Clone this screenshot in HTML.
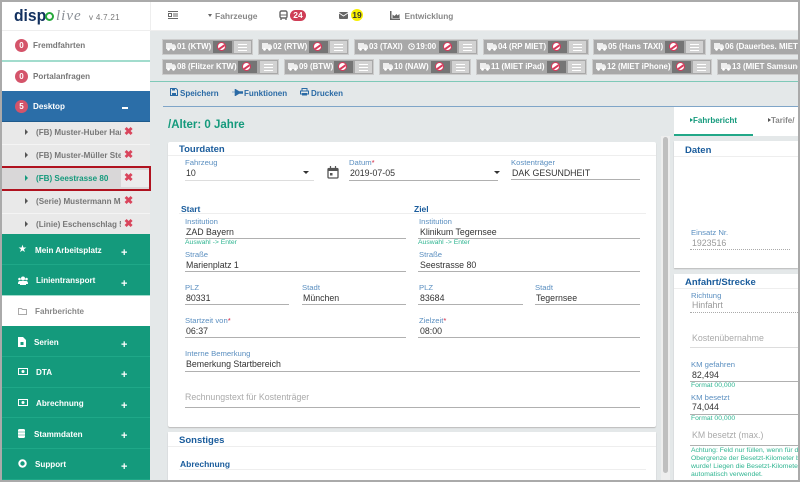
<!DOCTYPE html>
<html><head><meta charset="utf-8"><style>
html,body{margin:0;padding:0}
body{width:800px;height:482px;overflow:hidden;position:relative;background:#e4e8e9;font-family:"Liberation Sans",sans-serif}
div,span.a,svg.a{position:absolute}
.t{white-space:nowrap;line-height:12px}
.s{font-size:8.1px;font-weight:bold;color:#777}
.m{font-size:8.1px;font-weight:bold;color:#fff}
.g{background:#149a7c;left:2px;width:148px;border-bottom:1px solid #1fa888}
.b{width:13px;height:13px;border-radius:7px;background:#d4546a;color:#fff;font-size:8px;font-weight:bold;text-align:center;line-height:13px;left:15px}
.x{left:124px;font-size:11px;font-weight:bold;color:#d9455c;line-height:12px}
.p{left:121px;font-size:11px;font-weight:bold;color:#fff;line-height:12px}
.n{left:2px;width:148px;background:#e9e9e9;border-bottom:1px solid #f4f4f4}
.ar{width:0;height:0;border-left:3px solid #555;border-top:3px solid transparent;border-bottom:3px solid transparent;left:25px}
.tag{background:#a8a8a8;border:1px solid #ccc;height:14px;box-sizing:content-box;color:#fff;font-size:7.9px;font-weight:bold;line-height:14px;white-space:nowrap;overflow:hidden}
.tag:before{content:"";position:absolute;left:3px;top:3px;width:10px;height:6px;background:#eee;clip-path:polygon(0 0,60% 0,60% 20%,85% 20%,100% 55%,100% 100%,0 100%)}
.tag:after{content:"";position:absolute;left:4px;top:8px;width:8px;height:3px;background:radial-gradient(circle at 1.5px 1.4px,#fff 1.2px,transparent 1.5px),radial-gradient(circle at 6.5px 1.4px,#fff 1.2px,transparent 1.5px)}
.tag span.l{position:absolute;left:14px;top:0}
.tag i{position:absolute;top:1px;height:12px;background:#757575;display:block}
.tag u{position:absolute;top:1px;height:12px;width:17px;background:#d2d2d2;display:block;text-decoration:none}
.tag u:before{content:"";position:absolute;left:4px;right:4px;top:3px;height:5px;border-top:1px solid #fff;border-bottom:1px solid #fff}
.tag u:after{content:"";position:absolute;left:4px;right:4px;top:6px;height:1px;background:#fff}
.tag b{position:absolute;top:2px;width:7px;height:7px;border:1.5px solid #d9385a;border-radius:6px;background:#fff;display:block;overflow:hidden}
.tag b:after{content:"";position:absolute;left:-2px;top:2.500px;width:12px;height:2px;background:#d9385a;transform:rotate(-35deg)}
.lb{font-size:7.7px;color:#5b8fc0;white-space:nowrap;line-height:9px}
.v{font-size:8.8px;color:#333;white-space:nowrap;line-height:12px}
.ln{height:1px;background:#b0b0b0}
.hd{font-weight:bold;color:#1a5c9c;white-space:nowrap;font-size:9.5px;line-height:12px}
.hi{font-size:6.8px;color:#2fb591;white-space:nowrap;line-height:8px}
.st{color:#d21f3c}
.card{background:#fff;box-shadow:0 1px 1px #bbb}
.tb{font-size:8px;font-weight:bold;color:#2a6aa5;white-space:nowrap;line-height:12px}
</style></head><body>

<!-- header -->
<div style="left:2px;top:2px;width:796px;height:28px;background:#fff;border-bottom:1px solid #eee"></div>
<div style="left:150px;top:2px;width:1px;height:28px;background:#eee"></div>

<!-- logo -->
<div class="t" style="left:14px;top:6px;font-size:17px;font-weight:bold;color:#12305f;line-height:20px;transform:scaleX(.92);transform-origin:left top">disp</div>
<div style="left:45px;top:12px;width:5px;height:5px;border:2px solid #27a83c;border-radius:6px"></div>
<div class="t" style="left:56px;top:6px;font-family:'Liberation Serif',serif;font-style:italic;font-size:15px;color:#8a8f96;line-height:20px;letter-spacing:1px">live</div>
<div class="t" style="left:89px;top:12px;font-size:8px;color:#777;letter-spacing:.3px">v 4.7.21</div>

<!-- top nav -->
<svg class="a" style="left:168px;top:11px" width="11" height="8"><path d="M0 .5h10M0 7.500h10M5 3h5M5 5h5" stroke="#666" stroke-width="1"/><rect x=".5" y="2.500" width="3" height="3" fill="none" stroke="#666"/></svg>
<div style="left:208px;top:14px;width:0;height:0;border-left:2.500px solid transparent;border-right:2.500px solid transparent;border-top:3px solid #666"></div>
<div class="t" style="left:215px;top:10px;font-size:8.500px;font-weight:bold;color:#888">Fahrzeuge</div>
<svg class="a" style="left:279px;top:10px" width="9" height="11"><rect x="1" y="1" width="7" height="7" rx="1.500" fill="none" stroke="#666" stroke-width="1.400"/><path d="M1 5h7" stroke="#666"/><path d="M2 8v2M7 8v2" stroke="#666" stroke-width="1.400"/></svg>
<div style="left:290px;top:10px;width:16px;height:11px;border-radius:6px;background:#cf3e56;color:#fff;font-size:8.500px;font-weight:bold;text-align:center;line-height:11px">24</div>
<svg class="a" style="left:339px;top:12px" width="9" height="7"><rect width="9" height="7" rx="1" fill="#666"/><path d="M0 1l4.500 3L9 1" stroke="#fff" fill="none" stroke-width=".8"/></svg>
<div style="left:351px;top:9px;width:12px;height:12px;border-radius:6px;background:#f7f000;color:#333;font-size:8.500px;font-weight:bold;text-align:center;line-height:12px">19</div>
<svg class="a" style="left:390px;top:11px" width="10" height="9"><path d="M0 0h1.500v7.500H10V9H0zM2.500 7V3.500l2 1.500 2-2 1 1.500L9.500 3v4z" fill="#666"/></svg>
<div class="t" style="left:404.500px;top:10px;font-size:8.300px;font-weight:bold;color:#888">Entwicklung</div>

<!-- sidebar -->
<div style="left:2px;top:31px;width:148px;height:29px;background:#fff"></div>
<div style="left:2px;top:60px;width:148px;height:2px;background:#a2dccd"></div>
<div style="left:2px;top:62px;width:148px;height:29px;background:#fff"></div>
<div style="left:2px;top:91px;width:148px;height:31px;background:#2b6ea8;border-bottom:1px solid #1f5a8c;box-sizing:border-box"></div>
<div class="b" style="top:39px">0</div><div class="t s" style="left:33px;top:40px">Fremdfahrten</div>
<div class="b" style="top:70px">0</div><div class="t s" style="left:33px;top:71px">Portalanfragen</div>
<div class="b" style="top:100px">5</div><div class="t m" style="left:33px;top:101px">Desktop</div>
<div style="left:122px;top:107px;width:6px;height:1.500px;background:#fff"></div>

<div class="n" style="top:122px;height:22px"></div>
<div class="n" style="top:145px;height:22px"></div>
<div class="n" style="top:167px;height:24px;background:#d9d7d8;border:0"></div>
<div class="n" style="top:191px;height:22px"></div>
<div class="n" style="top:214px;height:20px"></div>
<div style="left:121px;top:170px;width:28px;height:17px;background:#ececec"></div>
<div class="ar" style="top:129px"></div><div class="t s" style="left:36px;top:127px;width:85px;overflow:hidden">(FB) Muster-Huber Hans</div><div class="t x" style="top:126px">✖</div>
<div class="ar" style="top:152px"></div><div class="t s" style="left:36px;top:150px;width:85px;overflow:hidden">(FB) Muster-Müller Stefan</div><div class="t x" style="top:149px">✖</div>
<div class="ar" style="top:175px;border-left-color:#149a7c"></div><div class="t s" style="left:36px;top:173px;color:#149a7c">(FB) Seestrasse 80</div><div class="t x" style="top:172px">✖</div>
<div class="ar" style="top:198px"></div><div class="t s" style="left:36px;top:196px;width:85px;overflow:hidden">(Serie) Mustermann Max</div><div class="t x" style="top:195px">✖</div>
<div class="ar" style="top:221px"></div><div class="t s" style="left:36px;top:219px;width:85px;overflow:hidden">(Linie) Eschenschlag 5 a</div><div class="t x" style="top:218px">✖</div>
<div style="left:0;top:166px;width:151px;height:25px;border:2px solid #b0121f;box-sizing:border-box"></div>

<div class="g" style="top:234px;height:30px"></div>
<div class="g" style="top:265px;height:30px;border-bottom:1px solid #a2dccd"></div>
<div style="left:2px;top:296px;width:148px;height:30px;background:#fff"></div>
<div class="g" style="top:326px;height:30px"></div>
<div class="g" style="top:357px;height:30px"></div>
<div class="g" style="top:388px;height:29px"></div>
<div class="g" style="top:418px;height:30px"></div>
<div class="g" style="top:449px;height:30px"></div>

<div class="t m" style="left:18px;top:244px;font-size:10px;font-weight:normal">★</div><div class="t m" style="left:35px;top:245px">Mein Arbeitsplatz</div><div class="p" style="top:247px">+</div>
<svg class="a" style="left:18px;top:276px" width="10" height="9"><circle cx="5" cy="2.500" r="2" fill="#fff"/><circle cx="1.500" cy="3" r="1.300" fill="#fff"/><circle cx="8.500" cy="3" r="1.300" fill="#fff"/><path d="M0 7.500Q0 5 2 5h6q2 0 2 2.500V8H0zM2 9V6h6v3z" fill="#fff"/></svg>
<div class="t m" style="left:36px;top:275px">Linientransport</div><div class="p" style="top:278px">+</div>
<svg class="a" style="left:18px;top:307px" width="9" height="8"><path d="M.5 1.500h3l1 1h4v5h-8z" fill="none" stroke="#aaa"/></svg>
<div class="t s" style="left:35px;top:306px;color:#888">Fahrberichte</div>
<svg class="a" style="left:18px;top:337px" width="8" height="10"><path d="M0 0h5l3 3v7H0z" fill="#fff"/><rect x="2.500" y="5" width="3" height="3" fill="#149a7c"/></svg>
<div class="t m" style="left:34px;top:337px">Serien</div><div class="p" style="top:339px">+</div>
<svg class="a" style="left:18px;top:368px" width="10" height="7"><rect x=".5" y=".5" width="9" height="6" fill="none" stroke="#fff"/><circle cx="5" cy="3.500" r="1.500" fill="#fff"/></svg>
<div class="t m" style="left:36px;top:367px">DTA</div><div class="p" style="top:369px">+</div>
<svg class="a" style="left:18px;top:399px" width="10" height="7"><rect x=".5" y=".5" width="9" height="6" fill="none" stroke="#fff"/><circle cx="5" cy="3.500" r="1.500" fill="#fff"/></svg>
<div class="t m" style="left:36px;top:398px">Abrechnung</div><div class="p" style="top:400px">+</div>
<svg class="a" style="left:18px;top:429px" width="7" height="9"><rect width="7" height="9" rx="1.500" fill="#fff"/><path d="M0 3h7M0 6h7" stroke="#149a7c" stroke-width=".5"/></svg>
<div class="t m" style="left:34px;top:429px">Stammdaten</div><div class="p" style="top:430px">+</div>
<svg class="a" style="left:18px;top:459px" width="9" height="9"><circle cx="4.500" cy="4.500" r="3.200" fill="none" stroke="#fff" stroke-width="2"/></svg>
<div class="t m" style="left:35px;top:459px">Support</div><div class="p" style="top:461px">+</div>

<!-- tag rows -->
<div class="tag" style="left:162px;top:39px;width:89px"><span class="l">01 (KTW)</span><i style="left:50px;width:19px"></i><b style="left:54px"></b><u style="left:71px"></u></div>
<div class="tag" style="left:258px;top:39px;width:89px"><span class="l">02 (RTW)</span><i style="left:50px;width:19px"></i><b style="left:54px"></b><u style="left:71px"></u></div>
<div class="tag" style="left:354px;top:39px;width:122px"><span class="l">03 (TAXI)</span><svg class="a" style="left:53px;top:3px" width="7" height="7"><circle cx="3.500" cy="3.500" r="2.800" fill="none" stroke="#fff"/><path d="M3.500 2v1.500H5" stroke="#fff" fill="none" stroke-width=".7"/></svg><span class="l" style="left:61px">19:00</span><i style="left:84px;width:18px"></i><b style="left:88px"></b><u style="left:104px"></u></div>
<div class="tag" style="left:483px;top:39px;width:104px"><span class="l">04 (RP MIET)</span><i style="left:64px;width:19px"></i><b style="left:68px"></b><u style="left:85px"></u></div>
<div class="tag" style="left:593px;top:39px;width:111px"><span class="l">05 (Hans TAXI)</span><i style="left:71px;width:19px"></i><b style="left:75px"></b><u style="left:92px"></u></div>
<div class="tag" style="left:710px;top:39px;width:90px"><span class="l">06 (Dauerbes. MIET)</span></div>

<div class="tag" style="left:162px;top:59px;width:115px"><span class="l">08 (Flitzer KTW)</span><i style="left:75px;width:19px"></i><b style="left:79px"></b><u style="left:97px"></u></div>
<div class="tag" style="left:284px;top:59px;width:88px"><span class="l">09 (BTW)</span><i style="left:49px;width:19px"></i><b style="left:53px"></b><u style="left:70px"></u></div>
<div class="tag" style="left:379px;top:59px;width:90px"><span class="l">10 (NAW)</span><i style="left:51px;width:19px"></i><b style="left:55px"></b><u style="left:72px"></u></div>
<div class="tag" style="left:476px;top:59px;width:109px"><span class="l">11 (MIET iPad)</span><i style="left:70px;width:19px"></i><b style="left:74px"></b><u style="left:91px"></u></div>
<div class="tag" style="left:592px;top:59px;width:118px"><span class="l">12 (MIET iPhone)</span><i style="left:79px;width:19px"></i><b style="left:83px"></b><u style="left:100px"></u></div>
<div class="tag" style="left:717px;top:59px;width:83px"><span class="l">13 (MIET Samsung)</span></div>

<div style="left:150px;top:81px;width:648px;height:1px;background:#7fc9b8"></div>

<!-- toolbar -->
<svg class="a" style="left:170px;top:88px" width="8" height="8"><path d="M.5.500h5.500l1.500 1.500v5.500h-7z" fill="none" stroke="#2a6aa5"/><path d="M2 .500h3v2H2zM2 5h4v2.500H2z" fill="#2a6aa5"/></svg>
<div class="tb" style="left:180px;top:88px">Speichern</div>
<svg class="a" style="left:232px;top:89px" width="11" height="7"><path d="M0 3h3M3 0v7l4-2.500h4v-2H7z" fill="#2a6aa5" stroke="#2a6aa5" stroke-width=".6"/></svg>
<div class="tb" style="left:244px;top:88px">Funktionen</div>
<svg class="a" style="left:300px;top:88px" width="9" height="8"><path d="M2 3V.500h5V3M2 6H.5V3h8v3H7" fill="none" stroke="#2a6aa5"/><path d="M2 5h5v2.500H2z" fill="#2a6aa5"/></svg>
<div class="tb" style="left:311px;top:88px">Drucken</div>
<div style="left:163px;top:106px;width:635px;height:1px;background:#7fa5c8"></div>

<div class="t" style="left:168px;top:118px;font-size:11.500px;font-weight:bold;color:#149a7c;line-height:14px">/Alter: 0 Jahre</div>

<!-- main card -->
<div class="card" style="left:168px;top:142px;width:488px;height:285px;border-radius:2px"></div>
<div style="left:168px;top:155px;width:488px;height:1px;background:#eee"></div>
<div class="hd" style="left:179px;top:144px">Tourdaten</div>

<div class="lb" style="left:185px;top:158px">Fahrzeug</div><div class="v" style="left:186px;top:167px">10</div>
<div style="left:303px;top:171px;width:0;height:0;border-left:3px solid transparent;border-right:3px solid transparent;border-top:3px solid #333"></div>
<div class="ln" style="left:185px;top:180px;width:129px;background:#ddd"></div>
<svg class="a" style="left:327px;top:166px" width="12" height="13"><rect x="1" y="2.500" width="10" height="9.500" rx="1" fill="none" stroke="#555" stroke-width="1.300"/><path d="M1 4h10" stroke="#555" stroke-width="2"/><path d="M3.500 0v2.500M8.500 0v2.500" stroke="#555" stroke-width="1.200"/><rect x="3" y="7" width="2.500" height="2.500" fill="#555"/></svg>
<div class="lb" style="left:349px;top:158px">Datum<span class="st">*</span></div><div class="v" style="left:350px;top:167px">2019-07-05</div>
<div style="left:494px;top:171px;width:0;height:0;border-left:3px solid transparent;border-right:3px solid transparent;border-top:3px solid #333"></div>
<div class="ln" style="left:349px;top:180px;width:149px"></div>
<div class="lb" style="left:511px;top:158px">Kostenträger</div><div class="v" style="left:512px;top:167px">DAK GESUNDHEIT</div>
<div class="ln" style="left:511px;top:179px;width:129px"></div>

<div class="t" style="left:181px;top:203px;font-size:8.500px;font-weight:bold;color:#1a5c9c">Start</div>
<div class="t" style="left:414px;top:203px;font-size:8.500px;font-weight:bold;color:#1a5c9c">Ziel</div>
<div style="left:179px;top:213px;width:467px;height:1px;background:#eee"></div>

<div class="lb" style="left:185px;top:217px">Institution</div><div class="v" style="left:186px;top:226px">ZAD Bayern</div><div class="ln" style="left:185px;top:238px;width:221px"></div>
<div class="hi" style="left:185px;top:239px">Auswahl -&gt; Enter</div>
<div class="lb" style="left:185px;top:250px">Straße</div><div class="v" style="left:186px;top:259px">Marienplatz 1</div><div class="ln" style="left:185px;top:271px;width:221px"></div>
<div class="lb" style="left:185px;top:283px">PLZ</div><div class="v" style="left:186px;top:292px">80331</div><div class="ln" style="left:185px;top:304px;width:104px"></div>
<div class="lb" style="left:302px;top:283px">Stadt</div><div class="v" style="left:303px;top:292px">München</div><div class="ln" style="left:302px;top:304px;width:104px"></div>

<div class="lb" style="left:419px;top:217px">Institution</div><div class="v" style="left:420px;top:226px">Klinikum Tegernsee</div><div class="ln" style="left:418px;top:238px;width:222px"></div>
<div class="hi" style="left:418px;top:239px">Auswahl -&gt; Enter</div>
<div class="lb" style="left:419px;top:250px">Straße</div><div class="v" style="left:420px;top:259px">Seestrasse 80</div><div class="ln" style="left:418px;top:271px;width:222px"></div>
<div class="lb" style="left:419px;top:283px">PLZ</div><div class="v" style="left:420px;top:292px">83684</div><div class="ln" style="left:418px;top:304px;width:105px"></div>
<div class="lb" style="left:535px;top:283px">Stadt</div><div class="v" style="left:536px;top:292px">Tegernsee</div><div class="ln" style="left:535px;top:304px;width:105px"></div>

<div class="lb" style="left:185px;top:316px">Startzeit von<span class="st">*</span></div><div class="v" style="left:186px;top:325px">06:37</div><div class="ln" style="left:185px;top:337px;width:221px"></div>
<div class="lb" style="left:419px;top:316px">Zielzeit<span class="st">*</span></div><div class="v" style="left:420px;top:325px">08:00</div><div class="ln" style="left:418px;top:337px;width:222px"></div>
<div class="lb" style="left:185px;top:349px">Interne Bemerkung</div><div class="v" style="left:186px;top:358px">Bemerkung Startbereich</div><div class="ln" style="left:185px;top:371px;width:455px"></div>
<div class="v" style="left:185px;top:391px;color:#aaa">Rechnungstext für Kostenträger</div><div class="ln" style="left:185px;top:407px;width:455px"></div>

<!-- sonstiges -->
<div class="card" style="left:168px;top:432px;width:488px;height:48px"></div>
<div style="left:168px;top:446px;width:488px;height:1px;background:#eee"></div>
<div class="hd" style="left:179px;top:435px">Sonstiges</div>
<div class="t" style="left:180px;top:458px;font-size:8.500px;font-weight:bold;color:#1a5c9c">Abrechnung</div>
<div style="left:179px;top:469px;width:467px;height:1px;background:#eee"></div>

<!-- scrollbar -->
<div style="left:661px;top:136px;width:9px;height:344px;background:#eeeeee"></div>
<div style="left:663px;top:137px;width:4.500px;height:336px;background:#bfbfbf;border-radius:3px"></div>

<!-- right tabs -->
<div style="left:674px;top:107px;width:124px;height:29px;background:#fff"></div>
<div style="left:674px;top:134px;width:79px;height:1.500px;background:#22a888"></div>
<div style="left:690px;top:118px;width:0;height:0;border-left:3px solid #149a7c;border-top:2.500px solid transparent;border-bottom:2.500px solid transparent"></div>
<div class="t" style="left:693px;top:115px;font-size:8px;font-weight:bold;color:#149a7c">Fahrbericht</div>
<div style="left:768px;top:118px;width:0;height:0;border-left:3px solid #555;border-top:2.500px solid transparent;border-bottom:2.500px solid transparent"></div>
<div class="t" style="left:771px;top:115px;font-size:8px;font-weight:bold;color:#888">Tarife/</div>

<!-- right cards -->
<div class="card" style="left:674px;top:141px;width:124px;height:127px"></div>
<div style="left:674px;top:156px;width:124px;height:1px;background:#eee"></div>
<div class="hd" style="left:685px;top:145px">Daten</div>
<div class="lb" style="left:691px;top:228px">Einsatz Nr.</div>
<div class="v" style="left:692px;top:237px;color:#999">1923516</div>
<div style="left:690px;top:249px;width:100px;border-top:1px dotted #aaa"></div>

<div class="card" style="left:674px;top:274px;width:124px;height:206px"></div>
<div style="left:674px;top:288px;width:124px;height:1px;background:#eee"></div>
<div class="hd" style="left:685px;top:277px">Anfahrt/Strecke</div>
<div class="lb" style="left:691px;top:291px">Richtung</div>
<div class="v" style="left:692px;top:299px;color:#999">Hinfahrt</div>
<div style="left:690px;top:312px;width:108px;border-top:1px dotted #aaa"></div>
<div class="v" style="left:692px;top:332px;color:#aaa">Kostenübernahme</div>
<div class="ln" style="left:690px;top:347px;width:108px;background:#ddd"></div>
<div class="lb" style="left:691px;top:360px">KM gefahren</div>
<div class="v" style="left:692px;top:369px">82,494</div>
<div class="ln" style="left:690px;top:381px;width:108px"></div>
<div class="hi" style="left:691px;top:382px">Format 00,000</div>
<div class="lb" style="left:691px;top:393px">KM besetzt</div>
<div class="v" style="left:692px;top:401px">74,044</div>
<div class="ln" style="left:690px;top:414px;width:108px"></div>
<div class="hi" style="left:691px;top:415px">Format 00,000</div>
<div class="v" style="left:692px;top:429px;color:#aaa">KM besetzt (max.)</div>
<div class="ln" style="left:690px;top:445px;width:108px"></div>
<div class="hi" style="left:691px;top:447px;line-height:8px;width:107px;overflow:hidden">Achtung: Feld nur füllen, wenn für diese<br>Obergrenze der Besetzt-Kilometer bekannt<br>wurde! Liegen die Besetzt-Kilometer darüber<br>automatisch verwendet.</div>

<!-- frame -->
<div style="left:0;top:0;width:800px;height:2px;background:#aaa"></div>
<div style="left:0;top:0;width:2px;height:482px;background:#aaa"></div>
<div style="left:798px;top:0;width:2px;height:482px;background:#aaa"></div>
<div style="left:0;top:480px;width:800px;height:2px;background:#aaa"></div>
</body></html>
